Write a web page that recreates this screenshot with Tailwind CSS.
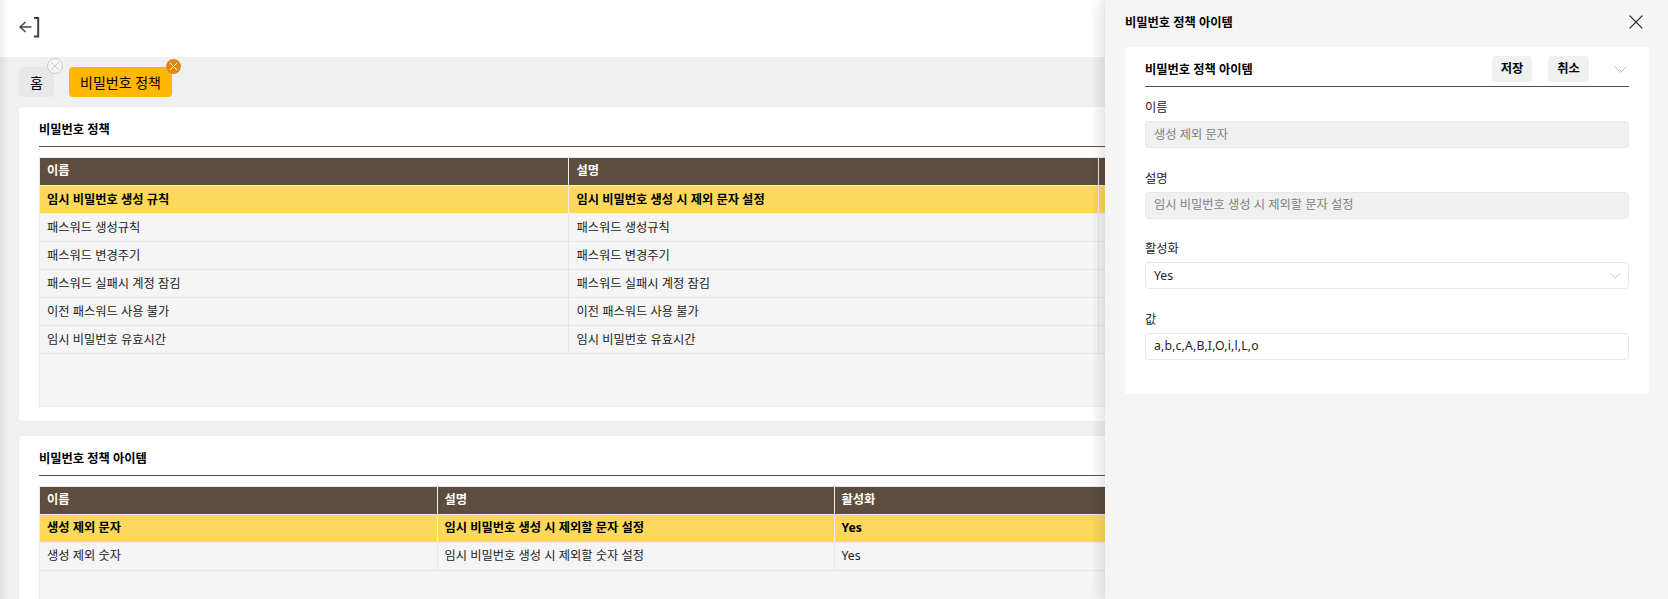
<!DOCTYPE html>
<html lang="ko">
<head>
<meta charset="UTF-8" />
<title>비밀번호 정책</title>
<script src="https://cdn.jsdelivr.net/npm/@tailwindcss/browser@4"></script>
</head>
<body class="h-[599px] overflow-hidden bg-[#f0f0f0] text-[#222] text-[12.25px] font-['Noto_Sans','Noto_Sans_CJK_KR',sans-serif]">
<div class="relative h-[599px] overflow-hidden">
  <!-- top bar -->
  <header class="h-[57px] bg-white pl-[19px] pb-[1px] flex items-center">
    <svg width="22" height="22" viewBox="0 0 22 22" fill="none" stroke="#444" stroke-width="1.5">
      <path d="M12.5 10H1M6.5 5 1 10l5.500 5" />
      <path d="M15 1H19.200V19.500H15" stroke="#3d3d3d" stroke-width="1.900" />
    </svg>
  </header>

  <!-- tabs -->
  <nav class="h-[50px] pl-[19px] pt-[10px] flex gap-[15px]">
    <div class="relative h-[30px] w-[35px] rounded-[4px] bg-[#e8e8e8] text-[14px] text-black flex items-center justify-center">
      홈
      <span class="absolute -top-[9px] -right-[9px] w-4 h-4 rounded-full bg-[#f5f5f5] border border-[#ccc] flex items-center justify-center">
        <svg width="10" height="10" viewBox="0 0 10 10" stroke="#ccc" stroke-width="1"><path d="M1 1l8 8M9 1l-8 8" /></svg>
      </span>
    </div>
    <div class="relative h-[30px] w-[103px] rounded-[4px] bg-[#ffb700] text-[14px] text-black flex items-center justify-center">
      비밀번호 정책
      <span class="absolute -top-[8px] -right-[9px] w-[15px] h-[15px] rounded-full bg-[#d98a1c] flex items-center justify-center">
        <svg width="9" height="9" viewBox="0 0 9 9" stroke="#fff" stroke-width="1"><path d="M1 1l7 7M8 1 1 8" /></svg>
      </span>
    </div>
  </nav>

  <main class="pl-[19px] pr-[19px] flex flex-col gap-[15px]">
    <!-- policy list -->
    <section class="h-[314px] bg-white rounded-[4px] px-[20px] flex flex-col">
      <div class="h-[40px] pt-[7px] border-b border-[#5c4d3e] flex items-center font-bold text-black shrink-0">비밀번호 정책</div>
      <div class="mt-[10px] h-[250px] bg-[#f5f5f5] border border-[#e8e8ee]">
        <table class="table-fixed w-full border-collapse">
          <thead>
            <tr class="h-[27px] bg-[#5c4d3e] text-white text-left">
              <th class="w-[528px] pl-[7px] font-bold border-r border-[#eee] border-b">이름</th>
              <th class="pl-[8px] font-bold border-r border-[#eee] border-b">설명</th>
              <th class="pl-[7px] font-bold border-b border-[#eee]"></th>
            </tr>
          </thead>
          <tbody>
            <tr class="h-[28px] bg-[#fdd85d] font-bold text-black">
              <td class="pl-[7px] pt-[3px] border-r border-b border-[#eee]">임시 비밀번호 생성 규칙</td>
              <td class="pl-[8px] pt-[3px] border-r border-b border-[#eee]">임시 비밀번호 생성 시 제외 문자 설정</td>
              <td class="border-b border-[#eee]"></td>
            </tr>
            <tr class="h-[28px]">
              <td class="pl-[7px] pt-[3px] border-r border-b border-[#e6e6ea]">패스워드 생성규칙</td>
              <td class="pl-[8px] pt-[3px] border-r border-b border-[#e6e6ea]">패스워드 생성규칙</td>
              <td class="border-b border-[#e6e6ea]"></td>
            </tr>
            <tr class="h-[28px]">
              <td class="pl-[7px] pt-[3px] border-r border-b border-[#e6e6ea]">패스워드 변경주기</td>
              <td class="pl-[8px] pt-[3px] border-r border-b border-[#e6e6ea]">패스워드 변경주기</td>
              <td class="border-b border-[#e6e6ea]"></td>
            </tr>
            <tr class="h-[28px]">
              <td class="pl-[7px] pt-[3px] border-r border-b border-[#e6e6ea]">패스워드 실패시 계정 잠김</td>
              <td class="pl-[8px] pt-[3px] border-r border-b border-[#e6e6ea]">패스워드 실패시 계정 잠김</td>
              <td class="border-b border-[#e6e6ea]"></td>
            </tr>
            <tr class="h-[28px]">
              <td class="pl-[7px] pt-[3px] border-r border-b border-[#e6e6ea]">이전 패스워드 사용 불가</td>
              <td class="pl-[8px] pt-[3px] border-r border-b border-[#e6e6ea]">이전 패스워드 사용 불가</td>
              <td class="border-b border-[#e6e6ea]"></td>
            </tr>
            <tr class="h-[28px]">
              <td class="pl-[7px] pt-[3px] border-r border-b border-[#e6e6ea]">임시 비밀번호 유효시간</td>
              <td class="pl-[8px] pt-[3px] border-r border-b border-[#e6e6ea]">임시 비밀번호 유효시간</td>
              <td class="border-b border-[#e6e6ea]"></td>
            </tr>
          </tbody>
        </table>
      </div>
    </section>

    <!-- policy items -->
    <section class="h-[314px] bg-white rounded-[4px] px-[20px] flex flex-col">
      <div class="h-[40px] pt-[7px] border-b border-[#5c4d3e] flex items-center font-bold text-black shrink-0">비밀번호 정책 아이템</div>
      <div class="mt-[10px] h-[250px] bg-[#f5f5f5] border border-[#e8e8ee]">
        <table class="table-fixed w-full border-collapse">
          <thead>
            <tr class="h-[27px] bg-[#5c4d3e] text-white text-left">
              <th class="pl-[7px] font-bold border-r border-b border-[#eee]">이름</th>
              <th class="pl-[7px] font-bold border-r border-b border-[#eee]">설명</th>
              <th class="pl-[7px] font-bold border-r border-b border-[#eee]">활성화</th>
              <th class="border-b border-[#eee]"></th>
            </tr>
          </thead>
          <tbody>
            <tr class="h-[28px] bg-[#fdd85d] font-bold text-black">
              <td class="pl-[7px] pt-[1px] border-r border-b border-[#eee]">생성 제외 문자</td>
              <td class="pl-[7px] pt-[1px] border-r border-b border-[#eee]">임시 비밀번호 생성 시 제외할 문자 설정</td>
              <td class="pl-[7px] pt-[1px] border-r border-b border-[#eee]">Yes</td>
              <td class="border-b border-[#eee]"></td>
            </tr>
            <tr class="h-[28px]">
              <td class="pl-[7px] pt-[1px] border-r border-b border-[#e6e6ea]">생성 제외 숫자</td>
              <td class="pl-[7px] pt-[1px] border-r border-b border-[#e6e6ea]">임시 비밀번호 생성 시 제외할 숫자 설정</td>
              <td class="pl-[7px] pt-[1px] border-r border-b border-[#e6e6ea]">Yes</td>
              <td class="border-b border-[#e6e6ea]"></td>
            </tr>
          </tbody>
        </table>
      </div>
    </section>
  </main>

  <!-- left edge shadow of the collapsed sidebar -->
  <div class="absolute top-0 bottom-0 left-0 w-0 shadow-[0_0_6px_2px_rgba(0,0,0,0.14)]"></div>

  <!-- side panel -->
  <aside class="absolute top-0 right-0 bottom-0 w-[563px] bg-[#f5f5f5] shadow-[-6px_0_10px_rgba(0,0,0,0.1)] pl-[20px] pr-[19px]">
    <div class="h-[47px] flex items-center justify-between pb-[3px]">
      <h2 class="pt-[2px] font-bold text-black">비밀번호 정책 아이템</h2>
      <svg class="mr-[6px]" width="14" height="14" viewBox="0 0 14 14" stroke="#222" stroke-width="1.2"><path d="M.7.7l12.600 12.600M13.300.7.700 13.300" /></svg>
    </div>
    <div class="h-[347px] bg-white rounded-[4px] px-[20px]">
      <div class="h-[40px] pt-[5px] border-b border-[#5c4d3e] flex items-center">
        <span class="pt-[2px] font-bold text-black flex-1">비밀번호 정책 아이템</span>
        <button class="w-[40px] h-[26px] rounded-[4px] bg-[#f0f0f0] font-bold text-black mr-[16px]">저장</button>
        <button class="w-[41px] h-[26px] rounded-[4px] bg-[#f0f0f0] font-bold text-black">취소</button>
        <svg class="ml-[25px] mr-[2px]" width="13" height="7" viewBox="0 0 13 7" fill="none" stroke="#bbb"><path d="M.5.5l6 6 6-6" /></svg>
      </div>
      <div class="pt-[13px]">
        <label class="block h-[21px] leading-[16px]">이름</label>
        <div class="h-[27px] rounded-[4px] bg-[#f0f0f0] border border-[#e8e8e8] pl-[8px] pt-[1px] flex items-center text-[#808080]">생성 제외 문자</div>
      </div>
      <div class="pt-[22.67px]">
        <label class="block h-[21px] leading-[16px]">설명</label>
        <div class="h-[27px] rounded-[4px] bg-[#f0f0f0] border border-[#e8e8e8] pl-[8px] pt-[1px] flex items-center text-[#808080]">임시 비밀번호 생성 시 제외할 문자 설정</div>
      </div>
      <div class="pt-[22.67px]">
        <label class="block h-[21px] leading-[16px]">활성화</label>
        <div class="h-[27px] rounded-[4px] bg-white border border-[#e8e8e8] px-[8px] flex items-center justify-between">
          Yes
          <svg width="10" height="6" viewBox="0 0 10 6" fill="none" stroke="#ccc"><path d="M.5.5 5 5 9.500.5" /></svg>
        </div>
      </div>
      <div class="pt-[22.67px]">
        <label class="block h-[21px] leading-[16px]">값</label>
        <div class="h-[27px] rounded-[4px] bg-white border border-[#e8e8e8] pl-[8px] flex items-center tracking-[0.15px]">a,b,c,A,B,I,O,i,l,L,o</div>
      </div>
    </div>
  </aside>
</div>
</body>
</html>
